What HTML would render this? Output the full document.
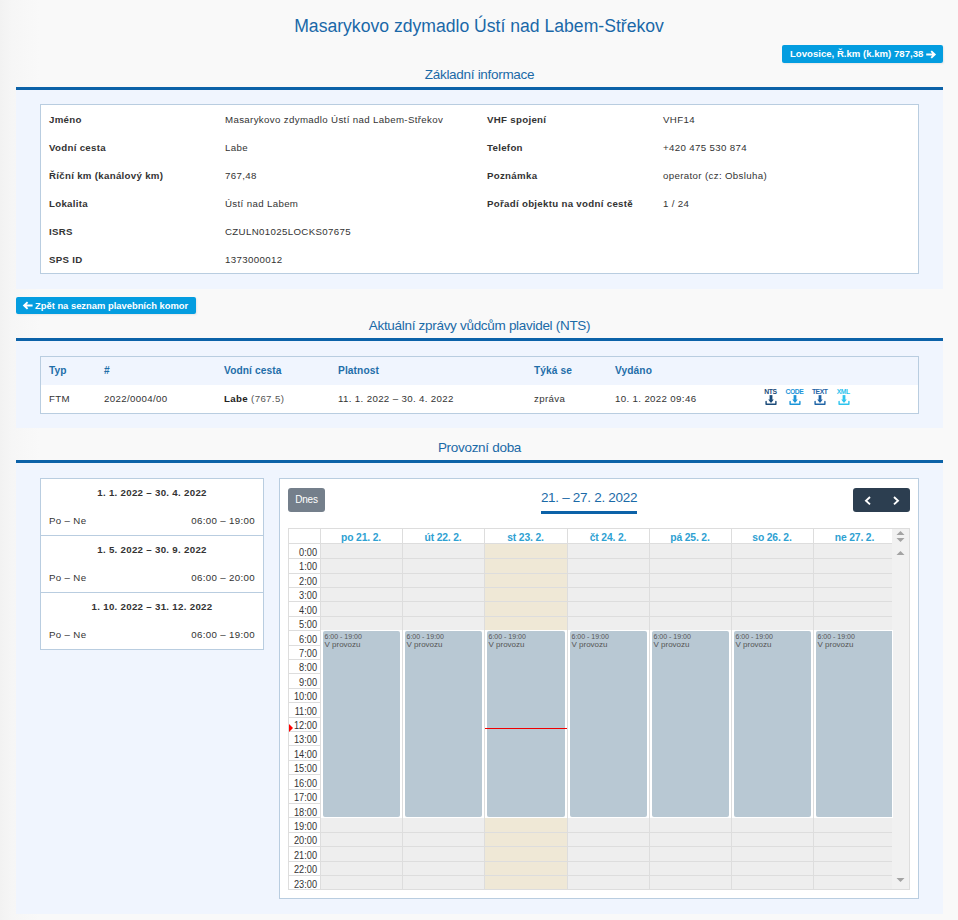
<!DOCTYPE html><html><head><meta charset="utf-8"><style>
*{box-sizing:border-box;margin:0;padding:0}
html,body{width:958px;height:920px;overflow:hidden}
body{position:relative;background:linear-gradient(to right,#f2f2f2 0,#f6f6f6 12px,#f9f9f9 40px,#f9f9f9 100%);font-family:"Liberation Sans",sans-serif;color:#222}
.a{position:absolute;white-space:nowrap}
.title{left:0;width:958px;text-align:center;font-size:17.6px;color:#1a68a8;line-height:22px}
.btn{background:#049de0;color:#fff;font-weight:bold;border-radius:2px;box-shadow:1px 1px 2px rgba(0,0,0,.07)}
.sechead{left:16px;width:927px;text-align:center;font-size:13.5px;letter-spacing:-.3px;color:#1b6aa7;line-height:16px}
.bar{left:16px;width:927px;height:3px;background:#0c62a8}
.panel{left:16px;width:927px;background:#f0f5fe}
.box{background:#fff;border:1px solid #b9cde0}
.t{font-size:9.7px;letter-spacing:.35px;line-height:12px;color:#333}
.b{font-size:9.7px;letter-spacing:.3px;line-height:12px;font-weight:bold;color:#333}
.th{font-size:10.2px;letter-spacing:.1px;line-height:12px;font-weight:bold;color:#1f6ea9}
.cl{left:288px;width:0}
.hl{background:#dddddd;height:1px}
.vl{background:#dddddd;width:1px}
.ev{background:#b8c8d3;border-radius:2px}
.evt{font-size:7px;line-height:8px;color:#555;letter-spacing:0}
.tm{font-size:10px;line-height:12px;color:#333;text-align:right;letter-spacing:0;transform:scaleX(.92);transform-origin:100% 50%}
.dh{font-size:10.3px;line-height:12px;font-weight:bold;color:#2ea1d2;text-align:center;letter-spacing:-.15px}
</style></head><body>
<div class="a title" style="top:15px">Masarykovo zdymadlo Ústí nad Labem-Střekov</div>
<div class="a btn" style="left:782px;top:45px;width:161px;height:18px;line-height:18px;padding-left:8px;font-size:9.6px">Lovosice, Ř.km (k.km) 787,38</div>
<svg class="a" style="left:925px;top:50px" width="12" height="9" viewBox="0 0 12 9"><path d="M1.2 4.5H9.6M6.2 1.1L9.7 4.5L6.2 7.9" stroke="#fff" stroke-width="1.9" fill="none"/></svg>
<div class="a sechead" style="top:67px">Základní informace</div>
<div class="a bar" style="top:87px"></div>
<div class="a panel" style="top:90px;height:199px"></div>
<div class="a box" style="left:40px;top:104px;width:879px;height:170px"></div>
<div class="a b" style="left:49px;top:114px;">Jméno</div>
<div class="a t" style="left:225px;top:114px;">Masarykovo zdymadlo Ústí nad Labem-Střekov</div>
<div class="a b" style="left:487px;top:114px;">VHF spojení</div>
<div class="a t" style="left:663px;top:114px;">VHF14</div>
<div class="a b" style="left:49px;top:142px;">Vodní cesta</div>
<div class="a t" style="left:225px;top:142px;">Labe</div>
<div class="a b" style="left:487px;top:142px;">Telefon</div>
<div class="a t" style="left:663px;top:142px;">+420 475 530 874</div>
<div class="a b" style="left:49px;top:170px;">Říční km (kanálový km)</div>
<div class="a t" style="left:225px;top:170px;">767,48</div>
<div class="a b" style="left:487px;top:170px;">Poznámka</div>
<div class="a t" style="left:663px;top:170px;">operator (cz: Obsluha)</div>
<div class="a b" style="left:49px;top:198px;">Lokalita</div>
<div class="a t" style="left:225px;top:198px;">Ústí nad Labem</div>
<div class="a b" style="left:487px;top:198px;">Pořadí objektu na vodní cestě</div>
<div class="a t" style="left:663px;top:198px;">1 / 24</div>
<div class="a b" style="left:49px;top:226px;">ISRS</div>
<div class="a t" style="left:225px;top:226px;">CZULN01025LOCKS07675</div>
<div class="a b" style="left:49px;top:254px;">SPS ID</div>
<div class="a t" style="left:225px;top:254px;">1373000012</div>
<div class="a btn" style="left:16px;top:297px;width:180px;height:17px;line-height:17px;padding-left:19px;font-size:9.4px">Zpět na seznam plavebních komor</div>
<svg class="a" style="left:22px;top:301px" width="12" height="9" viewBox="0 0 12 9"><path d="M10.6 4.5H2.2M5.6 1.1L2.1 4.5L5.6 7.9" stroke="#fff" stroke-width="1.9" fill="none"/></svg>
<div class="a sechead" style="top:318px">Aktuální zprávy vůdcům plavidel (NTS)</div>
<div class="a bar" style="top:338px"></div>
<div class="a panel" style="top:341px;height:87px"></div>
<div class="a box" style="left:40px;top:356px;width:879px;height:58px"></div>
<div class="a" style="left:41px;top:357px;width:877px;height:28px;background:#f0f5fe"></div>
<div class="a th" style="left:49px;top:365px;">Typ</div>
<div class="a th" style="left:104px;top:365px;">#</div>
<div class="a th" style="left:224px;top:365px;">Vodní cesta</div>
<div class="a th" style="left:338px;top:365px;">Platnost</div>
<div class="a th" style="left:534px;top:365px;">Týká se</div>
<div class="a th" style="left:615px;top:365px;">Vydáno</div>
<div class="a t" style="left:49px;top:393px;">FTM</div>
<div class="a t" style="left:104px;top:393px;">2022/0004/00</div>
<div class="a t" style="left:224px;top:393px;"><b style="color:#222">Labe</b> <span style="color:#555">(767.5)</span></div>
<div class="a t" style="left:338px;top:393px;">11. 1. 2022 – 30. 4. 2022</div>
<div class="a t" style="left:534px;top:393px;">zpráva</div>
<div class="a t" style="left:615px;top:393px;">10. 1. 2022 09:46</div>
<div class="a" style="left:755.65px;top:389px;width:30px;text-align:center;font-size:6.8px;line-height:6px;font-weight:bold;color:#1a4a78;letter-spacing:-.5px;text-indent:-.5px">NTS</div>
<svg class="a" style="left:764.5px;top:394px" width="12" height="12" viewBox="0 0 12 12"><rect x="4.6" y="1.1" width="2.8" height="4.8" fill="#1a4a78"/><path d="M3.2 5.4H8.8L6 9Z" fill="#1a4a78"/><path d="M1.1 7.4V10.2H10.9V7.4" stroke="#1a4a78" stroke-width="1.4" stroke-linecap="round" stroke-linejoin="round" fill="none"/></svg>
<div class="a" style="left:779.65px;top:389px;width:30px;text-align:center;font-size:6.8px;line-height:6px;font-weight:bold;color:#1b95d9;letter-spacing:-.5px;text-indent:-.5px">CODE</div>
<svg class="a" style="left:789px;top:394px" width="12" height="12" viewBox="0 0 12 12"><rect x="4.6" y="1.1" width="2.8" height="4.8" fill="#1b95d9"/><path d="M3.2 5.4H8.8L6 9Z" fill="#1b95d9"/><path d="M1.1 7.4V10.2H10.9V7.4" stroke="#1b95d9" stroke-width="1.4" stroke-linecap="round" stroke-linejoin="round" fill="none"/></svg>
<div class="a" style="left:804.9px;top:389px;width:30px;text-align:center;font-size:6.8px;line-height:6px;font-weight:bold;color:#1f64a6;letter-spacing:-.5px;text-indent:-.5px">TEXT</div>
<svg class="a" style="left:813.5px;top:394px" width="12" height="12" viewBox="0 0 12 12"><rect x="4.6" y="1.1" width="2.8" height="4.8" fill="#1f64a6"/><path d="M3.2 5.4H8.8L6 9Z" fill="#1f64a6"/><path d="M1.1 7.4V10.2H10.9V7.4" stroke="#1f64a6" stroke-width="1.4" stroke-linecap="round" stroke-linejoin="round" fill="none"/></svg>
<div class="a" style="left:828.5px;top:389px;width:30px;text-align:center;font-size:6.8px;line-height:6px;font-weight:bold;color:#2ec4ee;letter-spacing:-.5px;text-indent:-.5px">XML</div>
<svg class="a" style="left:837.8px;top:394px" width="12" height="12" viewBox="0 0 12 12"><rect x="4.6" y="1.1" width="2.8" height="4.8" fill="#2ec4ee"/><path d="M3.2 5.4H8.8L6 9Z" fill="#2ec4ee"/><path d="M1.1 7.4V10.2H10.9V7.4" stroke="#2ec4ee" stroke-width="1.4" stroke-linecap="round" stroke-linejoin="round" fill="none"/></svg>
<div class="a sechead" style="top:440px">Provozní doba</div>
<div class="a bar" style="top:460px"></div>
<div class="a panel" style="top:463px;height:451px"></div>
<div class="a box" style="left:40px;top:478px;width:224px;height:172px"></div>
<div class="a b" style="left:41px;width:222px;text-align:center;top:487px">1. 1. 2022 – 30. 4. 2022</div>
<div class="a t" style="left:49px;top:515px;">Po – Ne</div>
<div class="a t" style="left:150px;width:105px;text-align:right;top:515px">06:00 – 19:00</div>
<div class="a" style="left:41px;top:535px;width:222px;height:1px;background:#b9cde0"></div>
<div class="a b" style="left:41px;width:222px;text-align:center;top:544px">1. 5. 2022 – 30. 9. 2022</div>
<div class="a t" style="left:49px;top:572px;">Po – Ne</div>
<div class="a t" style="left:150px;width:105px;text-align:right;top:572px">06:00 – 20:00</div>
<div class="a" style="left:41px;top:592px;width:222px;height:1px;background:#b9cde0"></div>
<div class="a b" style="left:41px;width:222px;text-align:center;top:601px">1. 10. 2022 – 31. 12. 2022</div>
<div class="a t" style="left:49px;top:629px;">Po – Ne</div>
<div class="a t" style="left:150px;width:105px;text-align:right;top:629px">06:00 – 19:00</div>
<div class="a box" style="left:279px;top:478px;width:640px;height:421px"></div>
<div class="a" style="left:288px;top:488px;width:37px;height:24px;background:#747f8b;border-radius:3px;color:#fff;font-size:10px;line-height:24px;text-align:center;letter-spacing:-.2px">Dnes</div>
<div class="a" style="left:530px;top:490px;width:118px;text-align:center;font-size:13.5px;line-height:16px;color:#1b6aa7;letter-spacing:-.3px">21. – 27. 2. 2022</div>
<div class="a" style="left:541px;top:511px;width:96px;height:3px;background:#0c62a8"></div>
<div class="a" style="left:853px;top:488px;width:57px;height:24px;background:#2c3e50;border-radius:3px"></div>
<svg class="a" style="left:853px;top:488px" width="57" height="24" viewBox="0 0 57 24"><path d="M17 9L13 12.7L17 16.4M41 9L45 12.7L41 16.4" stroke="#fff" stroke-width="1.9" fill="none"/></svg>
<div class="a" style="left:288px;top:528px;width:622px;height:362px;border:1px solid #dddddd;background:#fff"></div>
<div class="a" style="left:892px;top:529px;width:17px;height:360px;background:#f1f1f1"></div>
<div class="a" style="left:321px;top:543px;width:571px;height:346px;background:#eeeeee"></div>
<div class="a" style="left:485px;top:543px;width:82px;height:346px;background:#efe8d6"></div>
<div class="a hl" style="left:289px;top:543px;width:603px"></div>
<div class="a hl" style="left:289px;top:558px;width:603px"></div>
<div class="a hl" style="left:289px;top:573px;width:603px"></div>
<div class="a hl" style="left:289px;top:587px;width:603px"></div>
<div class="a hl" style="left:289px;top:601px;width:603px"></div>
<div class="a hl" style="left:289px;top:616px;width:603px"></div>
<div class="a hl" style="left:289px;top:630px;width:603px"></div>
<div class="a hl" style="left:289px;top:645px;width:603px"></div>
<div class="a hl" style="left:289px;top:659px;width:603px"></div>
<div class="a hl" style="left:289px;top:673px;width:603px"></div>
<div class="a hl" style="left:289px;top:688px;width:603px"></div>
<div class="a hl" style="left:289px;top:702px;width:603px"></div>
<div class="a hl" style="left:289px;top:717px;width:603px"></div>
<div class="a hl" style="left:289px;top:731px;width:603px"></div>
<div class="a hl" style="left:289px;top:745px;width:603px"></div>
<div class="a hl" style="left:289px;top:760px;width:603px"></div>
<div class="a hl" style="left:289px;top:774px;width:603px"></div>
<div class="a hl" style="left:289px;top:789px;width:603px"></div>
<div class="a hl" style="left:289px;top:803px;width:603px"></div>
<div class="a hl" style="left:289px;top:817px;width:603px"></div>
<div class="a hl" style="left:289px;top:832px;width:603px"></div>
<div class="a hl" style="left:289px;top:846px;width:603px"></div>
<div class="a hl" style="left:289px;top:861px;width:603px"></div>
<div class="a hl" style="left:289px;top:875px;width:603px"></div>
<div class="a vl" style="left:320px;top:528px;height:361px"></div>
<div class="a vl" style="left:402px;top:528px;height:361px"></div>
<div class="a vl" style="left:484px;top:528px;height:361px"></div>
<div class="a vl" style="left:567px;top:528px;height:361px"></div>
<div class="a vl" style="left:649px;top:528px;height:361px"></div>
<div class="a vl" style="left:731px;top:528px;height:361px"></div>
<div class="a vl" style="left:813px;top:528px;height:361px"></div>
<div class="a dh" style="left:320.0px;width:82.0px;top:531.5px">po 21. 2.</div>
<div class="a dh" style="left:402.0px;width:82.0px;top:531.5px">út 22. 2.</div>
<div class="a dh" style="left:484.0px;width:83.0px;top:531.5px">st 23. 2.</div>
<div class="a dh" style="left:567.0px;width:82.0px;top:531.5px">čt 24. 2.</div>
<div class="a dh" style="left:649.0px;width:82.0px;top:531.5px">pá 25. 2.</div>
<div class="a dh" style="left:731.0px;width:82.0px;top:531.5px">so 26. 2.</div>
<div class="a dh" style="left:813.0px;width:83.0px;top:531.5px">ne 27. 2.</div>
<div class="a tm" style="left:289px;width:28px;top:547.00px">0:00</div>
<div class="a tm" style="left:289px;width:28px;top:561.42px">1:00</div>
<div class="a tm" style="left:289px;width:28px;top:575.84px">2:00</div>
<div class="a tm" style="left:289px;width:28px;top:590.26px">3:00</div>
<div class="a tm" style="left:289px;width:28px;top:604.68px">4:00</div>
<div class="a tm" style="left:289px;width:28px;top:619.10px">5:00</div>
<div class="a tm" style="left:289px;width:28px;top:633.52px">6:00</div>
<div class="a tm" style="left:289px;width:28px;top:647.94px">7:00</div>
<div class="a tm" style="left:289px;width:28px;top:662.36px">8:00</div>
<div class="a tm" style="left:289px;width:28px;top:676.78px">9:00</div>
<div class="a tm" style="left:289px;width:28px;top:691.20px">10:00</div>
<div class="a tm" style="left:289px;width:28px;top:705.62px">11:00</div>
<div class="a tm" style="left:289px;width:28px;top:720.04px">12:00</div>
<div class="a tm" style="left:289px;width:28px;top:734.46px">13:00</div>
<div class="a tm" style="left:289px;width:28px;top:748.88px">14:00</div>
<div class="a tm" style="left:289px;width:28px;top:763.30px">15:00</div>
<div class="a tm" style="left:289px;width:28px;top:777.72px">16:00</div>
<div class="a tm" style="left:289px;width:28px;top:792.14px">17:00</div>
<div class="a tm" style="left:289px;width:28px;top:806.56px">18:00</div>
<div class="a tm" style="left:289px;width:28px;top:820.98px">19:00</div>
<div class="a tm" style="left:289px;width:28px;top:835.40px">20:00</div>
<div class="a tm" style="left:289px;width:28px;top:849.82px">21:00</div>
<div class="a tm" style="left:289px;width:28px;top:864.24px">22:00</div>
<div class="a tm" style="left:289px;width:28px;top:878.66px">23:00</div>
<div class="a" style="left:321px;top:630px;width:81px;height:188px;background:#fff"></div>
<div class="a ev" style="left:323px;top:631px;width:77px;height:186px;border-radius:2px"></div>
<div class="a evt" style="left:324.5px;top:633px">6:00 - 19:00<br><span style="font-size:8px">V provozu</span></div>
<div class="a" style="left:403px;top:630px;width:81px;height:188px;background:#fff"></div>
<div class="a ev" style="left:405px;top:631px;width:77px;height:186px;border-radius:2px"></div>
<div class="a evt" style="left:406.5px;top:633px">6:00 - 19:00<br><span style="font-size:8px">V provozu</span></div>
<div class="a" style="left:485px;top:630px;width:82px;height:188px;background:#fff"></div>
<div class="a ev" style="left:487px;top:631px;width:78px;height:186px;border-radius:2px"></div>
<div class="a evt" style="left:488.5px;top:633px">6:00 - 19:00<br><span style="font-size:8px">V provozu</span></div>
<div class="a" style="left:568px;top:630px;width:81px;height:188px;background:#fff"></div>
<div class="a ev" style="left:570px;top:631px;width:77px;height:186px;border-radius:2px"></div>
<div class="a evt" style="left:571.5px;top:633px">6:00 - 19:00<br><span style="font-size:8px">V provozu</span></div>
<div class="a" style="left:650px;top:630px;width:81px;height:188px;background:#fff"></div>
<div class="a ev" style="left:652px;top:631px;width:77px;height:186px;border-radius:2px"></div>
<div class="a evt" style="left:653.5px;top:633px">6:00 - 19:00<br><span style="font-size:8px">V provozu</span></div>
<div class="a" style="left:732px;top:630px;width:81px;height:188px;background:#fff"></div>
<div class="a ev" style="left:734px;top:631px;width:77px;height:186px;border-radius:2px"></div>
<div class="a evt" style="left:735.5px;top:633px">6:00 - 19:00<br><span style="font-size:8px">V provozu</span></div>
<div class="a" style="left:814px;top:630px;width:79px;height:188px;background:#fff"></div>
<div class="a ev" style="left:816px;top:631px;width:76px;height:186px;border-radius:2px 0 0 2px"></div>
<div class="a evt" style="left:817.5px;top:633px">6:00 - 19:00<br><span style="font-size:8px">V provozu</span></div>
<div class="a" style="left:485px;top:728px;width:82px;height:1px;background:#e00"></div>
<svg class="a" style="left:289px;top:724px" width="5" height="8"><path d="M0 0L4 4L0 8Z" fill="#f00"/></svg>
<svg class="a" style="left:895px;top:530px" width="12" height="360"><path d="M1.5 5L5.5 1L9.5 5Z M1.5 8L5.5 12L9.5 8Z M1.5 25L5.5 21L9.5 25Z M1.5 348L5.5 352L9.5 348Z" fill="#a3a3a3"/></svg>
</body></html>
